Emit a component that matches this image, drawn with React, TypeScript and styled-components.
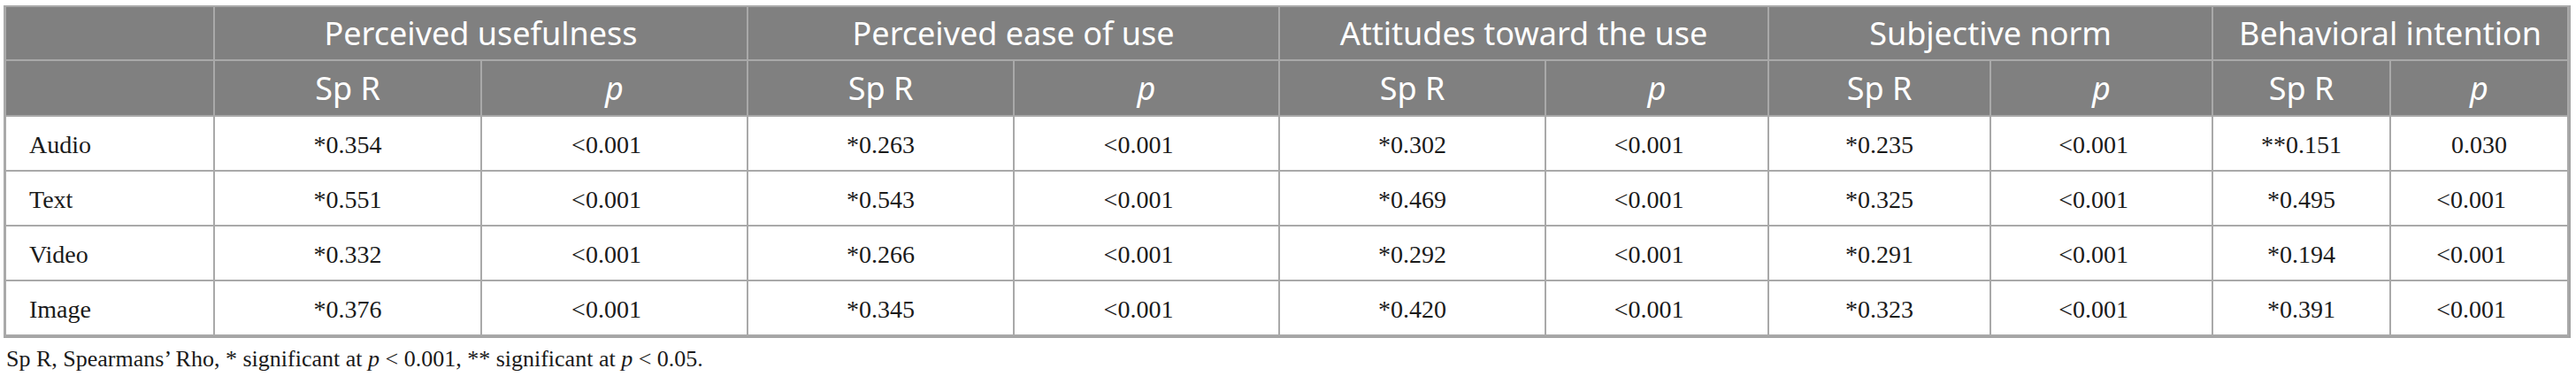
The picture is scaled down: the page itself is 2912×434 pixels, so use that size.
import React from "react";
import styled, { createGlobalStyle } from "styled-components";

const GlobalStyle = createGlobalStyle`
  html, body {
    margin: 0;
    padding: 0;
    background: #ffffff;
  }
  body {
    font-family: "Liberation Serif", "Times New Roman", serif;
    color: #1a1a1a;
  }
`;

const Page = styled.div`
  padding: 6px 0 0 4px;
`;

const Table = styled.table`
  border-collapse: separate;
  border-spacing: 0;
  table-layout: fixed;
  width: 2902px;
  border-top: 2px solid #a9a9a9;
  border-left: 3px solid #a9a9a9;
  border-right: 2px solid #a4a4a4;
  border-bottom: 2px solid #a4a4a4;
`;

const HeadRow = styled.tr<{ $h: number }>`
  height: ${(p) => p.$h}px;
  background: #808080;
`;

const BodyRow = styled.tr`
  height: 62px;
  background: #ffffff;
`;

const HeadCell = styled.th<{ $italic?: boolean }>`
  padding: 0 8px;
  border-right: 2px solid #a9a9a9;
  border-bottom: 2px solid #a9a9a9;
  font-family: "Noto Sans", "Open Sans", sans-serif;
  font-weight: 400;
  font-size: 36px;
  font-style: ${(p) => (p.$italic ? "italic" : "normal")};
  color: #ffffff;
  text-align: center;
  vertical-align: middle;
  white-space: nowrap;
  line-height: 1;
`;

const LabelCell = styled.td`
  padding: 4px 0 0 26px;
  border-right: 2px solid #a9a9a9;
  border-bottom: 2px solid #a9a9a9;
  font-size: 28px;
  text-align: left;
  vertical-align: middle;
  line-height: 1;
`;

const Cell = styled.td<{ $shift?: boolean }>`
  padding: 4px ${(p) => (p.$shift ? "18px" : "0")} 0 0;
  border-right: 2px solid #a9a9a9;
  border-bottom: 2px solid #a9a9a9;
  font-size: 28px;
  text-align: center;
  vertical-align: middle;
  white-space: nowrap;
  line-height: 1;
`;

const Footnote = styled.p`
  margin: 9px 0 0 3px;
  font-size: 26px;
  line-height: 30px;
  color: #1a1a1a;
`;

const Em = styled.i`
  font-style: italic;
`;

const widths = [236, 302, 301, 301, 300, 301, 252, 251, 251, 201, 201];

const groups = [
  "Perceived usefulness",
  "Perceived ease of use",
  "Attitudes toward the use",
  "Subjective norm",
  "Behavioral intention",
];

type Row = { label: string; values: [string, string][] };

const rows: Row[] = [
  {
    label: "Audio",
    values: [
      ["*0.354", "<0.001"],
      ["*0.263", "<0.001"],
      ["*0.302", "<0.001"],
      ["*0.235", "<0.001"],
      ["**0.151", "0.030"],
    ],
  },
  {
    label: "Text",
    values: [
      ["*0.551", "<0.001"],
      ["*0.543", "<0.001"],
      ["*0.469", "<0.001"],
      ["*0.325", "<0.001"],
      ["*0.495", "<0.001"],
    ],
  },
  {
    label: "Video",
    values: [
      ["*0.332", "<0.001"],
      ["*0.266", "<0.001"],
      ["*0.292", "<0.001"],
      ["*0.291", "<0.001"],
      ["*0.194", "<0.001"],
    ],
  },
  {
    label: "Image",
    values: [
      ["*0.376", "<0.001"],
      ["*0.345", "<0.001"],
      ["*0.420", "<0.001"],
      ["*0.323", "<0.001"],
      ["*0.391", "<0.001"],
    ],
  },
];

export default function App() {
  return (
    <Page>
      <GlobalStyle />
      <Table>
        <colgroup>
          {widths.map((w, i) => (
            <col key={i} style={{ width: w }} />
          ))}
        </colgroup>
        <thead>
          <HeadRow $h={61}>
            <HeadCell />
            {groups.map((g) => (
              <HeadCell key={g} colSpan={2}>
                {g}
              </HeadCell>
            ))}
          </HeadRow>
          <HeadRow $h={63}>
            <HeadCell />
            {groups.map((g) => (
              <React.Fragment key={g}>
                <HeadCell>Sp R</HeadCell>
                <HeadCell $italic>p</HeadCell>
              </React.Fragment>
            ))}
          </HeadRow>
        </thead>
        <tbody>
          {rows.map((r) => (
            <BodyRow key={r.label}>
              <LabelCell>{r.label}</LabelCell>
              {r.values.map(([a, b], i) => (
                <React.Fragment key={i}>
                  <Cell>{a}</Cell>
                  <Cell $shift={b.startsWith("<")}>{b}</Cell>
                </React.Fragment>
              ))}
            </BodyRow>
          ))}
        </tbody>
      </Table>
      <Footnote>
        Sp R, Spearmans’ Rho, * significant at <Em>p</Em> &lt; 0.001, ** significant at{" "}
        <Em>p</Em> &lt; 0.05.
      </Footnote>
    </Page>
  );
}
